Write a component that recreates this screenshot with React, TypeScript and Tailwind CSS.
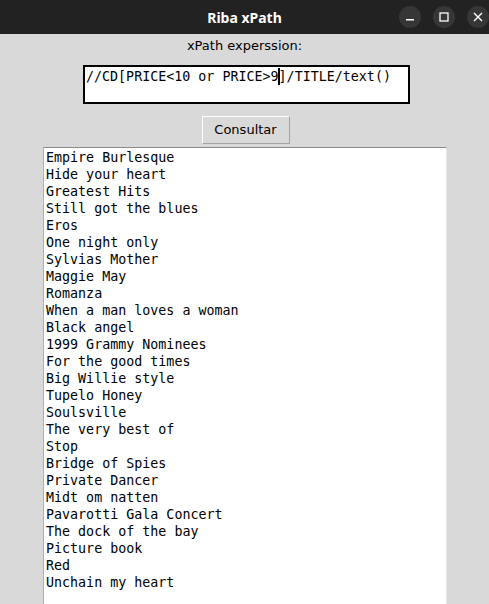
import React from "react";

const titles = [
  "Empire Burlesque",
  "Hide your heart",
  "Greatest Hits",
  "Still got the blues",
  "Eros",
  "One night only",
  "Sylvias Mother",
  "Maggie May",
  "Romanza",
  "When a man loves a woman",
  "Black angel",
  "1999 Grammy Nominees",
  "For the good times",
  "Big Willie style",
  "Tupelo Honey",
  "Soulsville",
  "The very best of",
  "Stop",
  "Bridge of Spies",
  "Private Dancer",
  "Midt om natten",
  "Pavarotti Gala Concert",
  "The dock of the bay",
  "Picture book",
  "Red",
  "Unchain my heart",
];

const TitleBar = () => {
  return (
    <div className="relative h-[34px] bg-[#222222] flex items-center justify-center shrink-0">
      <div className="text-white font-bold text-[14px] font-['Noto_Sans',sans-serif]">
        Riba xPath
      </div>
      <div className="absolute right-0 top-[6px] flex gap-[12px]">
        <div className="w-[22px] h-[22px] rounded-full bg-[#363636] flex items-center justify-center">
          <svg width="10" height="10" viewBox="0 0 10 10">
            <rect x="1" y="7" width="8" height="1.5" fill="white" />
          </svg>
        </div>
        <div className="w-[22px] h-[22px] rounded-full bg-[#363636] flex items-center justify-center">
          <svg width="10" height="10" viewBox="0 0 10 10">
            <rect x="1" y="1" width="8" height="8" fill="none" stroke="white" strokeWidth="1.3" />
          </svg>
        </div>
        <div className="w-[22px] h-[22px] rounded-full bg-[#363636] flex items-center justify-center">
          <svg width="10" height="10" viewBox="0 0 10 10">
            <path d="M1 1 L9 9 M9 1 L1 9" stroke="white" strokeWidth="1.4" />
          </svg>
        </div>
      </div>
    </div>
  );
};

export default function App() {
  return (
    <div className="h-screen w-full flex flex-col bg-[#d9d9d9] overflow-hidden">
      <TitleBar />
      <div className="flex-1 flex flex-col items-center pt-[3px] min-h-0">
        <div className="text-[13px] leading-[17px] text-black font-['DejaVu_Sans',sans-serif]">
          xPath experssion:
        </div>

        <div className="mt-[11px] ml-[4px] w-[327px] h-[39px] border-2 border-black bg-white px-[1px] pt-[1px] font-['DejaVu_Sans_Mono',monospace] text-[13.33px] leading-[17px] text-black whitespace-pre">
          //CD[PRICE&lt;10 or PRICE&gt;9
          <span className="inline-block w-[2px] h-[17px] bg-black align-top -ml-[1px] -mr-[1px]"></span>
          ]/TITLE/text()
        </div>

        <button className="mt-[12px] ml-[2px] w-[88px] h-[28px] bg-[#d9d9d9] border border-t-white border-l-white border-r-[#a3a3a3] border-b-[#a3a3a3] text-[13px] text-black font-['DejaVu_Sans',sans-serif]">
          Consultar
        </button>

        <div className="mt-[3px] ml-[1px] w-[404px] flex-1 bg-white border-t border-l border-t-[#8c8c8c] border-l-[#b0b0b0] border-r border-r-[#e6e6e6] pl-[2px] pt-[1px] font-['DejaVu_Sans_Mono',monospace] text-[13.33px] leading-[17px] text-black">
          {titles.map((t) => (
            <div key={t} className="whitespace-pre">
              {t}
            </div>
          ))}
        </div>
      </div>
    </div>
  );
}
